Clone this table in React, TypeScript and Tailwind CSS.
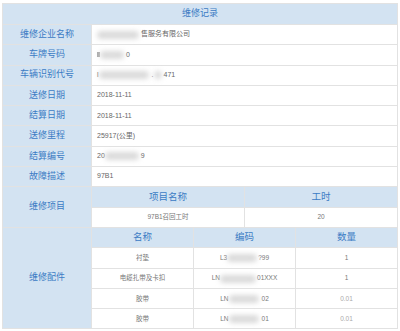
import React from "react";

const font = { fontFamily: '"Liberation Sans", "Noto Sans CJK SC", sans-serif' };

function Blob({ w }: { w: number }) {
  return (
    <span
      className="inline-block h-[8px] bg-[#dadada] rounded-full blur-[2.5px] align-middle"
      style={{ width: w }}
    />
  );
}

const info: { label: string; value: React.ReactNode }[] = [
  {
    label: "维修企业名称",
    value: (
      <>
        <Blob w={42} />
        <span className="ml-[2px]">售服务有限公司</span>
      </>
    ),
  },
  {
    label: "车牌号码",
    value: (
      <>
        <span className="inline-block w-[3px] h-[5px] bg-[#aaa] align-middle" />
        <Blob w={24} />
        <span className="ml-[2px]">0</span>
      </>
    ),
  },
  {
    label: "车辆识别代号",
    value: (
      <>
        <span>l</span>
        <Blob w={50} />
        <span className="ml-[3px]">.</span>
        <Blob w={8} />
        <span className="ml-[2px]">471</span>
      </>
    ),
  },
  { label: "送修日期", value: "2018-11-11" },
  { label: "结算日期", value: "2018-11-11" },
  { label: "送修里程", value: "25917(公里)" },
  {
    label: "结算编号",
    value: (
      <>
        <span>20</span>
        <Blob w={34} />
        <span className="ml-[2px]">9</span>
      </>
    ),
  },
  { label: "故障描述", value: "97B1" },
];

const parts: { name: string; code: React.ReactNode; qty: string }[] = [
  {
    name: "衬垫",
    code: (
      <>
        <span>L3</span>
        <Blob w={30} />
        <span className="ml-[1px]">?99</span>
      </>
    ),
    qty: "1",
  },
  {
    name: "电缆扎带及卡扣",
    code: (
      <>
        <span>LN</span>
        <Blob w={36} />
        <span className="ml-[1px]">01XXX</span>
      </>
    ),
    qty: "1",
  },
  {
    name: "胶带",
    code: (
      <>
        <span>LN</span>
        <Blob w={30} />
        <span className="ml-[3px]">02</span>
      </>
    ),
    qty: "0.01",
  },
  {
    name: "胶带",
    code: (
      <>
        <span>LN</span>
        <Blob w={30} />
        <span className="ml-[3px]">01</span>
      </>
    ),
    qty: "0.01",
  },
];

export default function App() {
  const labelCls =
    "bg-[#d3e3f2] text-[#3b7bc4] text-[9px] text-center border border-[#e2e2e2] h-[20.3px] p-0";
  const headCls =
    "bg-[#d3e3f2] text-[#3b7bc4] text-[9.5px] text-center border border-[#e2e2e2] h-[20.3px] p-0";
  const valueCls =
    "bg-white text-[#666] text-[7px] text-left pl-[5px] border border-[#e2e2e2] h-[20.3px] whitespace-nowrap";
  const subCls =
    "bg-white text-[#777] text-[6.5px] text-center border border-[#e2e2e2] h-[20.3px] p-0 whitespace-nowrap";

  return (
    <div className="w-[400px] h-[331px] bg-white overflow-hidden pt-[3px] pl-[2px]" style={font}>
      <table className="w-[395px] table-fixed border-collapse border border-[#d8d8d8]">
        <colgroup>
          <col className="w-[89px]" />
          <col className="w-[51px]" />
          <col className="w-[51px]" />
          <col className="w-[51px]" />
          <col className="w-[51px]" />
          <col className="w-[51px]" />
          <col className="w-[51px]" />
        </colgroup>
        <tbody>
          <tr>
            <td colSpan={7} className={headCls + " h-[21px] text-[9px]"}>
              维修记录
            </td>
          </tr>
          {info.map((r) => (
            <tr key={r.label}>
              <td className={labelCls}>{r.label}</td>
              <td colSpan={6} className={valueCls}>
                {r.value}
              </td>
            </tr>
          ))}
          <tr>
            <td rowSpan={2} className={labelCls}>
              维修项目
            </td>
            <td colSpan={3} className={headCls}>
              项目名称
            </td>
            <td colSpan={3} className={headCls}>
              工时
            </td>
          </tr>
          <tr>
            <td colSpan={3} className={subCls}>
              97B1召回工时
            </td>
            <td colSpan={3} className={subCls}>
              20
            </td>
          </tr>
          <tr>
            <td rowSpan={5} className={labelCls}>
              维修配件
            </td>
            <td colSpan={2} className={headCls}>
              名称
            </td>
            <td colSpan={2} className={headCls}>
              编码
            </td>
            <td colSpan={2} className={headCls}>
              数量
            </td>
          </tr>
          {parts.map((p, i) => (
            <tr key={i}>
              <td colSpan={2} className={subCls}>
                {p.name}
              </td>
              <td colSpan={2} className={subCls}>
                {p.code}
              </td>
              <td colSpan={2} className={subCls + (p.qty === "1" ? "" : " text-[#aaa]")}>
                {p.qty}
              </td>
            </tr>
          ))}
        </tbody>
      </table>
    </div>
  );
}
